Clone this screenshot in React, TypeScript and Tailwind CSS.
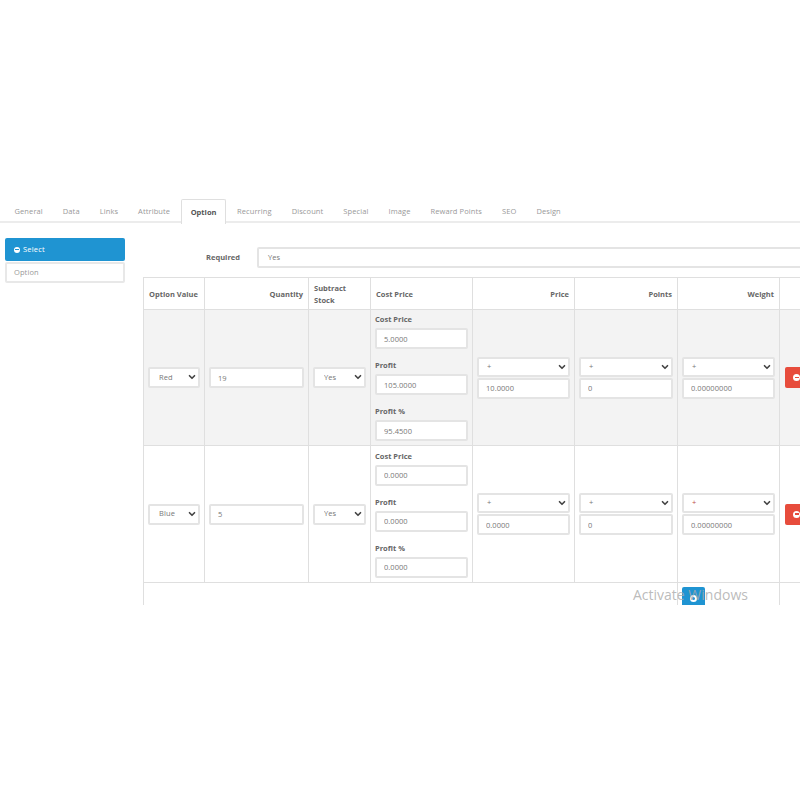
import { ChevronDown } from "lucide-react";

const tabs = ["General", "Data", "Links", "Attribute", "Option", "Recurring", "Discount", "Special", "Image", "Reward Points", "SEO", "Design"];

function Select({ value, red = false, plus = false }: { value: string; red?: boolean; plus?: boolean }) {
  return (
    <div className="relative">
      <select
        defaultValue={value}
        className={`block w-full appearance-none rounded-[2px] border-2 border-[#e4e4e4] bg-white text-[7.5px] tracking-[0.1px] outline-none ${plus ? "h-[20px] pl-[8px]" : "h-[21px] pl-[9px]"} ${red ? "text-[#c0504a]" : "text-[#777]"}`}
      >
        <option>{value}</option>
      </select>
      <ChevronDown className="pointer-events-none absolute right-[3px] top-[5px] h-[10px] w-[10px] text-[#444]" strokeWidth={4} />
    </div>
  );
}

function Input({ value, className = "pl-[7px]" }: { value: string; className?: string }) {
  return (
    <input
      readOnly
      value={value}
      className={`block h-[21px] w-full rounded-[2px] border-2 border-[#e4e4e4] bg-white text-[7.5px] tracking-[0.05px] text-[#777] outline-none ${className}`}
    />
  );
}

function Field({ label, value, gap }: { label: string; value: string; gap: string }) {
  return (
    <div className={gap}>
      <div className="mb-[4px] text-[7.5px] font-bold leading-[10px] text-[#666]">{label}</div>
      <Input value={value} className="pl-[7px]" />
    </div>
  );
}

function Remove() {
  return (
    <button className="ml-[1px] flex h-[21px] w-[40px] items-center rounded-[2px] bg-[#e74c3c] pl-[8px]">
      <span className="flex h-[7px] w-[7px] items-center justify-center rounded-full bg-white">
        <span className="h-[1.5px] w-[4px] bg-[#e74c3c]" />
      </span>
    </button>
  );
}

function Stack({ value, red }: { value: string; red?: boolean }) {
  return (
    <>
      <Select value="+" plus red={red} />
      <div className="mt-[1px]">
        <Input value={value} />
      </div>
    </>
  );
}

function Row({ option, qty, cost, profit, pct, price, shaded }: { option: string; qty: string; cost: string; profit: string; pct: string; price: string; shaded?: boolean }) {
  const cell = "border border-[#dfdfdf] px-[4px] align-middle";
  return (
    <tr className={shaded ? "bg-[#f3f3f3] h-[136px]" : "bg-white h-[137px]"}>
      <td className={cell}><Select value={option} /></td>
      <td className={cell}><Input value={qty} /></td>
      <td className={cell}><Select value="Yes" /></td>
      <td className={cell}>
        <Field label="Cost Price" value={cost} gap="mb-[11px]" />
        <Field label="Profit" value={profit} gap="mb-[11px]" />
        <Field label="Profit %" value={pct} gap="" />
      </td>
      <td className={cell}><Stack value={price} /></td>
      <td className={cell}><Stack value="0" /></td>
      <td className={cell}><Stack value="0.00000000" red={!shaded} /></td>
      <td className={cell}><Remove /></td>
    </tr>
  );
}

export default function App() {
  const head = "border border-[#dfdfdf] px-[5px] text-[7.5px] font-bold leading-[12px] whitespace-nowrap text-[#666]";
  return (
    <div className="relative h-[800px] w-[800px] overflow-hidden bg-white font-['Open_Sans',sans-serif]">
      <div className="h-[199px]" />
      <div className="h-[406px] overflow-hidden">
        <div className="flex h-[24px] border-b-2 border-[#ececec] pl-[5px]">
          {tabs.map((t) => (
            <div
              key={t}
              className={
                t === "Option"
                  ? "mr-[1px] -mb-[2px] flex h-[25px] items-center rounded-t-[2px] border-x border-t border-[#dfdfdf] bg-white px-[9px] pt-[2px] text-[7.5px] font-bold text-[#555]"
                  : "mr-[1px] flex h-[23px] items-center px-[9.5px] pt-[2px] text-[7.5px] tracking-[0.1px] text-[#999]"
              }
            >
              {t}
            </div>
          ))}
        </div>
        <div className="flex pl-[5px] pt-[15px]">
          <div className="w-[120px] shrink-0">
            <div className="flex h-[23px] items-center gap-[3px] rounded-[2px] bg-[#1f94d2] pl-[9px] text-[7.5px] tracking-[0.2px] text-white">
              <span className="flex h-[6px] w-[6px] items-center justify-center rounded-full bg-white">
                <span className="h-[1px] w-[4px] bg-[#1f94d2]" />
              </span>
              Select
            </div>
            <div className="mt-[1px] flex h-[21px] items-center rounded-[2px] border-2 border-[#e8e8e8] pl-[7px] text-[7.5px] tracking-[0.1px] text-[#999]">
              Option
            </div>
          </div>
          <div className="ml-[18px] w-[720px] shrink-0">
            <div className="flex items-center pt-[9px]">
              <div className="w-[97px] text-right text-[7.5px] font-bold text-[#666]">Required</div>
              <div className="ml-[17px] flex h-[21px] w-[600px] items-center rounded-[2px] border-2 border-[#e4e4e4] pl-[9px] text-[7.5px] text-[#777]">
                Yes
              </div>
            </div>
            <table className="mt-[9px] w-[720px] table-fixed border-collapse">
              <colgroup>
                <col className="w-[61px]" />
                <col className="w-[104px]" />
                <col className="w-[62px]" />
                <col className="w-[102px]" />
                <col className="w-[102px]" />
                <col className="w-[103px]" />
                <col className="w-[102px]" />
                <col className="w-[84px]" />
              </colgroup>
              <thead>
                <tr className="h-[32px]">
                  <th className={`${head} text-left`}>Option Value</th>
                  <th className={`${head} text-right`}>Quantity</th>
                  <th className={`${head} text-left`}>Subtract<br />Stock</th>
                  <th className={`${head} text-left`}>Cost Price</th>
                  <th className={`${head} text-right`}>Price</th>
                  <th className={`${head} text-right`}>Points</th>
                  <th className={`${head} text-right`}>Weight</th>
                  <th className={head} />
                </tr>
              </thead>
              <tbody>
                <Row shaded option="Red" qty="19" cost="5.0000" profit="105.0000" pct="95.4500" price="10.0000" />
                <Row option="Blue" qty="5" cost="0.0000" profit="0.0000" pct="0.0000" price="0.0000" />
                <tr className="h-[40px]">
                  <td colSpan={6} className="border border-[#dfdfdf]" />
                  <td className="border border-[#dfdfdf] px-[4px] pt-[4px] align-top">
                    <button className="flex h-[23px] w-[23px] items-center justify-center rounded-[2px] bg-[#1f94d2]">
                      <span className="flex h-[7px] w-[7px] items-center justify-center rounded-full bg-white">
                        <span className="h-[3px] w-[3px] rounded-full bg-[#1f94d2]" />
                      </span>
                    </button>
                  </td>
                  <td className="border border-[#dfdfdf]" />
                </tr>
              </tbody>
            </table>
          </div>
        </div>
      </div>
      <div className="pointer-events-none absolute left-[633px] top-[585px] text-[14px] leading-[20px] text-[#aaa]/80">Activate Windows</div>
    </div>
  );
}
